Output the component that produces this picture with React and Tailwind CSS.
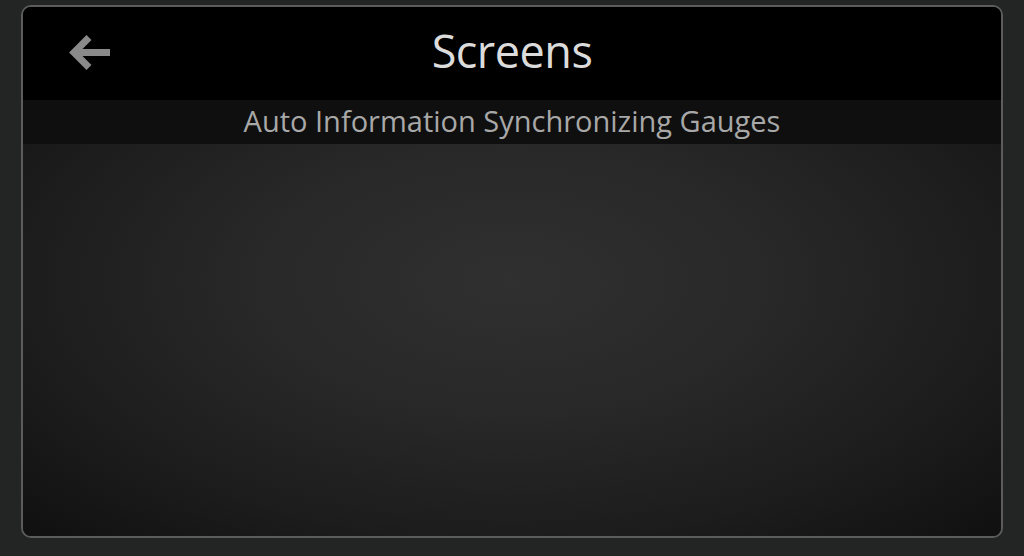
import React from "react";

const BackArrow = () => (
  <svg width="44" height="40" viewBox="0 0 44 40" fill="none">
    <path d="M42 19.5H8" stroke="#8a8a8a" strokeWidth="7" />
    <path d="M21 4.5L6 19.5L21 34.5" stroke="#8a8a8a" strokeWidth="7" strokeLinejoin="miter" />
  </svg>
);

const App = () => {
  return (
    <div className="w-[1024px] h-[556px] bg-[#232525] pt-[5px] pl-[21px] pr-[21px] pb-[18px] font-['Open_Sans',sans-serif]">
      <div className="w-full h-full border-2 border-[#5c5c5c] rounded-[10px] overflow-hidden flex flex-col bg-[#111]">
        {/* Header */}
        <div className="h-[93px] bg-black relative flex items-center justify-center shrink-0">
          <button className="absolute left-[45px] top-[26px]">
            <BackArrow />
          </button>
          <h1 className="text-[45px] text-[#dcdcdc] tracking-[-0.5px] leading-none mt-[-6px]">Screens</h1>
        </div>

        {/* Subtitle band */}
        <div className="h-[44px] bg-[#0f0f0f] flex items-center justify-center shrink-0">
          <span className="text-[29px] text-[#a8a8a8] leading-none mt-[-4px]">Auto Information Synchronizing Gauges</span>
        </div>

        {/* Body */}
        <div className="flex-1 bg-[radial-gradient(ellipse_farthest-corner_at_50%_35%,#303030_0%,#282828_38%,#1c1c1c_72%,#101010_100%)]"></div>
      </div>
    </div>
  );
};

export default App;
